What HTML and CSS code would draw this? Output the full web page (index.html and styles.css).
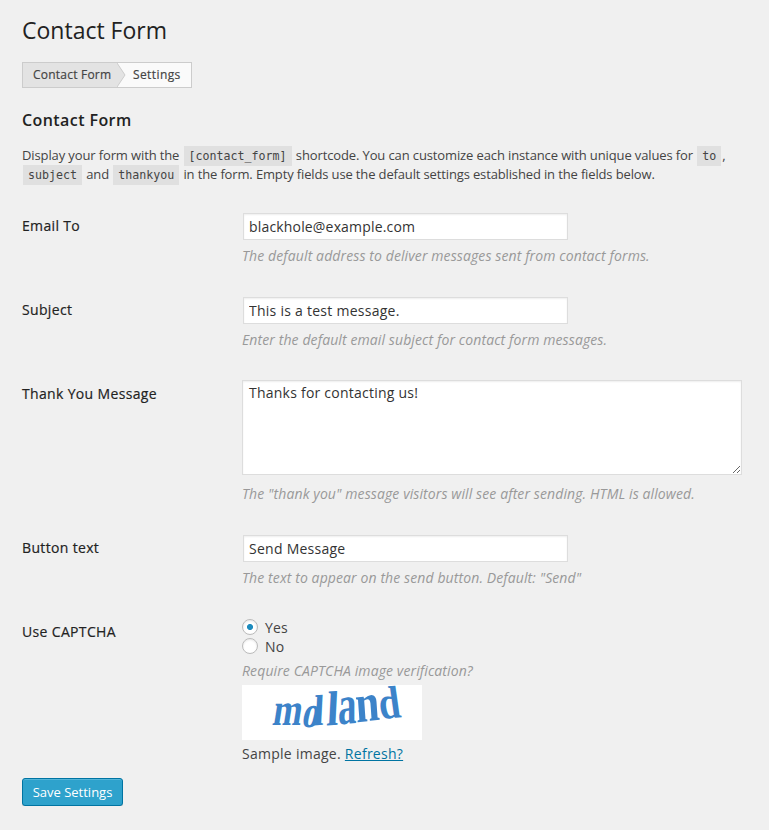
FILE: index.html
```html
<!DOCTYPE html>
<html lang="en">
<head>
<meta charset="utf-8">
<title>Contact Form</title>
<link rel="stylesheet" href="styles.css">
</head>
<body>
<main class="wrap">
  <h1 class="page-title">Contact Form</h1>
  <nav class="crumbs">
    <span class="crumb-parent">Contact Form</span>
    <svg class="crumb-arrow" width="9" height="24" viewBox="0 0 9 24"><path d="M0 0L8 12L0 24Z" fill="#e3e3e3"/><path d="M0 0L8 12L0 24" fill="none" stroke="#ccc"/></svg>
    <span class="crumb-current">Settings</span>
  </nav>
  <h2 class="section-title">Contact Form</h2>
  <p class="intro"><span class="line first">Display your form with the <code>[contact_form]</code> shortcode. You can customize each instance with unique values for <code>to</code>,</span> <span class="line second"><code>subject</code> and <code>thankyou</code> in the form. Empty fields use the default settings established in the fields below.</span></p>
  <form>
    <div class="row">
      <label class="label" for="email">Email To</label>
      <div class="field">
        <input class="text email" id="email" type="text" value="blackhole@example.com">
        <p class="help">The default address to deliver messages sent from contact forms.</p>
      </div>
    </div>
    <div class="row">
      <label class="label" for="subject">Subject</label>
      <div class="field">
        <input class="text" id="subject" type="text" value="This is a test message.">
        <p class="help">Enter the default email subject for contact form messages.</p>
      </div>
    </div>
    <div class="row tall">
      <label class="label" for="thanks">Thank You Message</label>
      <div class="field">
        <textarea class="area" id="thanks">Thanks for contacting us!</textarea>
        <p class="help">The "thank you" message visitors will see after sending. HTML is allowed.</p>
      </div>
    </div>
    <div class="row">
      <label class="label" for="button">Button text</label>
      <div class="field">
        <input class="text" id="button" type="text" value="Send Message">
        <p class="help">The text to appear on the send button. Default: "Send"</p>
      </div>
    </div>
    <div class="row captcha-row">
      <span class="label">Use CAPTCHA</span>
      <div class="field">
        <label class="option"><input class="radio" type="radio" name="captcha" checked>Yes</label>
        <label class="option"><input class="radio" type="radio" name="captcha">No</label>
        <p class="help">Require CAPTCHA image verification?</p>
        <svg class="captcha" width="180" height="55" viewBox="0 0 180 55">
          <g class="captcha-text">
            <text transform="translate(29.5 40) skewX(-9) scale(.97 1.28)">m</text>
            <text transform="translate(58.5 41.5) skewX(-12) scale(.95 1.25)">o</text>
            <text transform="translate(71 40.5) rotate(-4) skewX(-7) scale(1.05 1.2)">l</text>
            <text transform="translate(84 40.5) rotate(-4) skewX(-7) scale(1.22 1.35)">l</text>
            <text transform="translate(96 39.5) rotate(-5) skewX(-5) scale(1.03 1.55)">a</text>
            <text transform="translate(114.5 37.5) rotate(-7) skewX(-3) scale(1.2 1.5)">n</text>
            <text transform="translate(138.5 34) rotate(-5) skewX(3) scale(1.08 1.28)">d</text>
          </g>
        </svg>
        <p class="sample">Sample image. <a href="#">Refresh?</a></p>
      </div>
    </div>
    <button class="save" type="button">Save Settings</button>
  </form>
</main>
</body>
</html>
```
FILE: styles.css
```css
* { box-sizing: border-box; }
body {
  margin: 0;
  background: #f0f0f0;
  color: #444;
  font: 13px/19px "Open Sans", sans-serif;
}
.wrap { padding: 16px 22px 0; }
h1, h2, p { margin: 0; }
.page-title { color: #222; font-size: 23px; font-weight: 400; line-height: 29px; }
.crumbs {
  display: flex;
  width: 170px;
  height: 26px;
  margin-top: 17px;
  border: 1px solid #ccc;
  background: #fafafa;
  font-size: 12px;
  line-height: 24px;
  letter-spacing: .22px;
  -webkit-text-stroke: .18px currentColor;
}
.crumb-parent { width: 94px; padding-left: 10px; background: #e3e3e3; white-space: nowrap; }
.crumb-arrow { display: block; }
.crumb-current { padding-left: 7px; letter-spacing: .4px; }
.section-title { margin-top: 22px; color: #222; font-size: 16px; font-weight: 600; line-height: 20px; letter-spacing: .42px; }
.intro { margin-top: 16px; }
.line { display: block; height: 19px; white-space: nowrap; letter-spacing: -.12px; }
.second { letter-spacing: -.14px; }
code {
  position: relative;
  top: -1px;
  display: inline-block;
  height: 20px;
  margin: 0 1px;
  padding: 0 5px;
  background: #e0e0e0;
  font: 11.63px/21px "DejaVu Sans Mono", monospace;
  letter-spacing: 0;
  vertical-align: middle;
}
.row { display: grid; grid-template-columns: 220px 1fr; height: 84px; }
form { padding-top: 29px; }
.row.tall { height: 154px; }
.row.captcha-row { height: 159px; }
.label { padding-top: 3px; color: #222; font-size: 14px; letter-spacing: .34px; -webkit-text-stroke: .18px currentColor; }
.text {
  display: block;
  width: 325px;
  height: 27px;
  margin: 0 0 6px 1px;
  padding: 0 5px;
  border: 1px solid #ddd;
  background: #fff;
  box-shadow: inset 0 1px 2px rgba(0, 0, 0, .07);
  color: #333;
  font: 14px "Open Sans", sans-serif;
  letter-spacing: .26px;
}
.text.email { letter-spacing: .17px; }
.area {
  display: block;
  width: 500px;
  height: 95px;
  margin-top: -1px;
  padding: 2px 6px;
  border: 1px solid #ddd;
  box-shadow: inset 0 1px 2px rgba(0, 0, 0, .07);
  color: #333;
  font: 14px/20px "Open Sans", sans-serif;
  letter-spacing: .23px;
}
.help { color: #999; font-size: 14px; font-style: italic; line-height: 20px; letter-spacing: .105px; white-space: nowrap; }
.area + .help { margin-top: 9px; }
.option { display: flex; align-items: center; height: 19px; font-size: 14px; letter-spacing: .2px; }
.option:first-child { margin-top: -1px; }
.radio {
  position: relative;
  top: -1px;
  appearance: none;
  width: 16px;
  height: 16px;
  margin: 0 7px 0 0;
  border: 1px solid #bbb;
  border-radius: 50%;
  background: #fff;
  box-shadow: inset 0 1px 2px rgba(0, 0, 0, .1);
}
.radio:checked { background: radial-gradient(circle, #1e8cbe 2.7px, #fff 3.3px); }
.captcha-row .help { margin-top: 5px; }
.captcha { display: block; margin-top: 4px; background: #fff; }
.captcha-text { fill: #3c83c9; font: bold 36px "Liberation Serif", serif; }
.sample { margin-top: 4px; font-size: 14px; line-height: 20px; letter-spacing: .27px; }
.sample a { color: #0074a2; }
.save {
  display: block;
  width: 101px;
  height: 28px;
  padding: 0;
  border: 1px solid #0074a2;
  border-radius: 3px;
  background: #2ea2cc;
  box-shadow: inset 0 1px 0 rgba(120, 200, 230, .5), 0 1px 0 rgba(0, 0, 0, .15);
  color: #fff;
  font: 13px/26px "Open Sans", sans-serif;
}
```
